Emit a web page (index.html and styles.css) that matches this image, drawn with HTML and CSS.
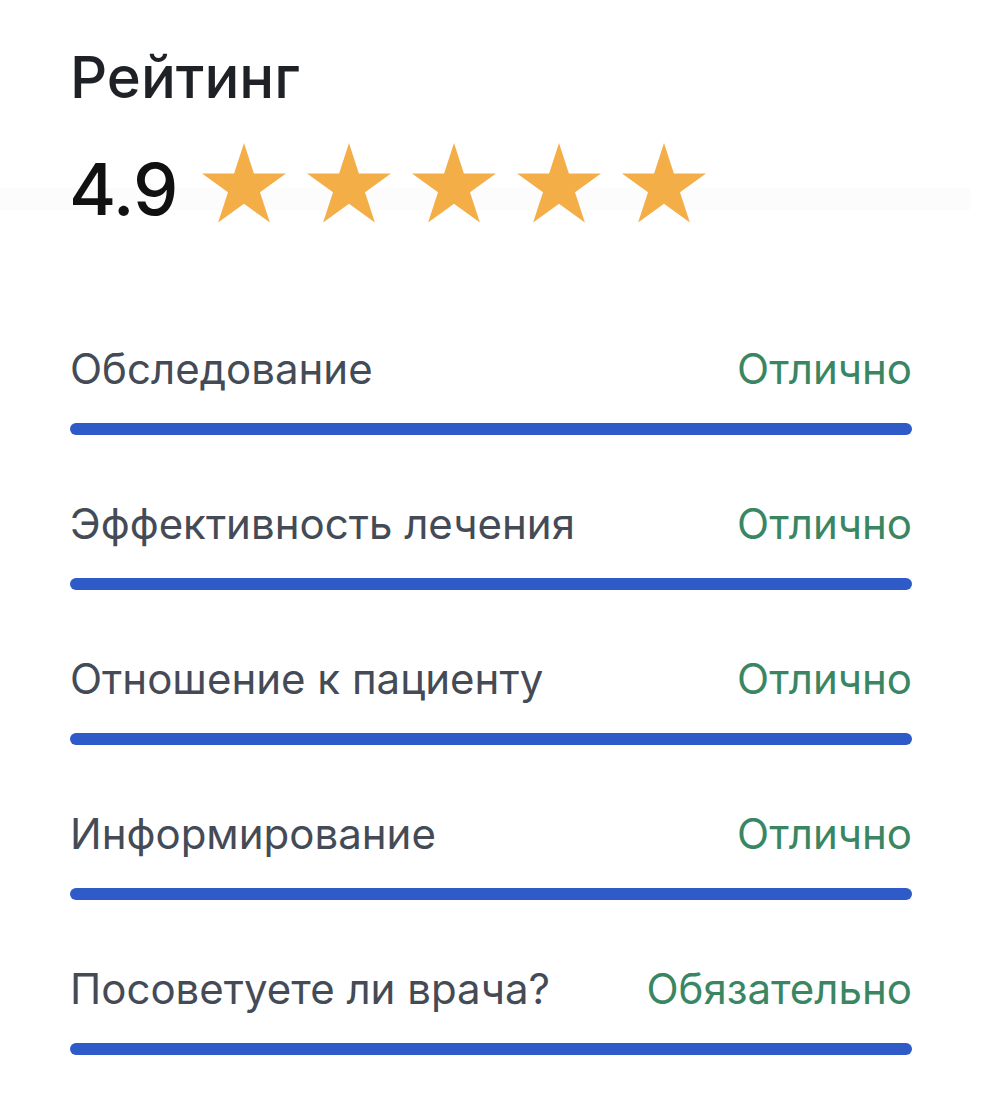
FILE: index.html
```html
<!DOCTYPE html>
<html lang="ru">
<head>
<meta charset="utf-8">
<title>Рейтинг</title>
<link rel="stylesheet" href="styles.css">
</head>
<body>
<main class="rating">
  <h1 class="rating__title">Рейтинг</h1>
  <div class="rating__score">
    <span class="rating__value">4.9</span>
    <div class="rating__stars">
      <svg class="star" viewBox="0 0 84 80"><polygon points="42,0 51.9,30.4 84,30.4 58,49.2 67.9,79.6 42,60.8 16.1,79.6 26,49.2 0,30.4 32.1,30.4"/></svg>
      <svg class="star" viewBox="0 0 84 80"><polygon points="42,0 51.9,30.4 84,30.4 58,49.2 67.9,79.6 42,60.8 16.1,79.6 26,49.2 0,30.4 32.1,30.4"/></svg>
      <svg class="star" viewBox="0 0 84 80"><polygon points="42,0 51.9,30.4 84,30.4 58,49.2 67.9,79.6 42,60.8 16.1,79.6 26,49.2 0,30.4 32.1,30.4"/></svg>
      <svg class="star" viewBox="0 0 84 80"><polygon points="42,0 51.9,30.4 84,30.4 58,49.2 67.9,79.6 42,60.8 16.1,79.6 26,49.2 0,30.4 32.1,30.4"/></svg>
      <svg class="star" viewBox="0 0 84 80"><polygon points="42,0 51.9,30.4 84,30.4 58,49.2 67.9,79.6 42,60.8 16.1,79.6 26,49.2 0,30.4 32.1,30.4"/></svg>
    </div>
  </div>
  <ul class="criteria">
    <li class="criterion">
      <div class="criterion__head"><span class="criterion__name">Обследование</span><span class="criterion__grade">Отлично</span></div>
      <div class="criterion__bar"></div>
    </li>
    <li class="criterion">
      <div class="criterion__head"><span class="criterion__name">Эффективность лечения</span><span class="criterion__grade">Отлично</span></div>
      <div class="criterion__bar"></div>
    </li>
    <li class="criterion">
      <div class="criterion__head"><span class="criterion__name">Отношение к пациенту</span><span class="criterion__grade">Отлично</span></div>
      <div class="criterion__bar"></div>
    </li>
    <li class="criterion">
      <div class="criterion__head"><span class="criterion__name">Информирование</span><span class="criterion__grade">Отлично</span></div>
      <div class="criterion__bar"></div>
    </li>
    <li class="criterion">
      <div class="criterion__head"><span class="criterion__name">Посоветуете ли врача?</span><span class="criterion__grade">Обязательно</span></div>
      <div class="criterion__bar"></div>
    </li>
  </ul>
</main>
</body>
</html>
```
FILE: styles.css
```css
* { box-sizing: border-box; }
html, body { margin: 0; padding: 0; background: #ffffff; }
body {
  font-family: Inter, "Noto Sans", sans-serif;
  background-image: linear-gradient(#fcfcfc, #fcfcfc);
  background-repeat: no-repeat;
  background-position: 0 188px;
  background-size: 970px 22px;
}
.rating {
  width: 842px;
  margin-left: 70px;
  padding-top: 42px;
}
.rating__title {
  margin: 0;
  font-size: 58px;
  line-height: 70px;
  font-weight: 500;
  color: #1e2227;
}
.rating__score {
  display: flex;
  align-items: flex-start;
  margin-top: 31px;
  height: 80px;
}
.rating__value {
  font-size: 72px;
  line-height: 80px;
  padding-top: 6px;
  font-weight: 500;
  color: #111111;
  letter-spacing: -1px;
  margin-left: -1px;
}
.rating__stars {
  display: flex;
  gap: 21px;
  margin-left: 25px;
}
.star {
  width: 84px;
  height: 80px;
  display: block;
  fill: #f4ae48;
}
.criteria {
  list-style: none;
  margin: 121px 0 0;
  padding: 0;
  display: flex;
  flex-direction: column;
  gap: 64px;
}
.criterion__head {
  display: flex;
  justify-content: space-between;
  align-items: baseline;
  font-size: 42px;
  line-height: 50px;
}
.criterion__name { color: #454b56; }
.criterion__grade { color: #3a8662; }
.criterion__bar {
  margin-top: 29px;
  height: 12px;
  border-radius: 6px;
  background: #2f5bc8;
}
```
